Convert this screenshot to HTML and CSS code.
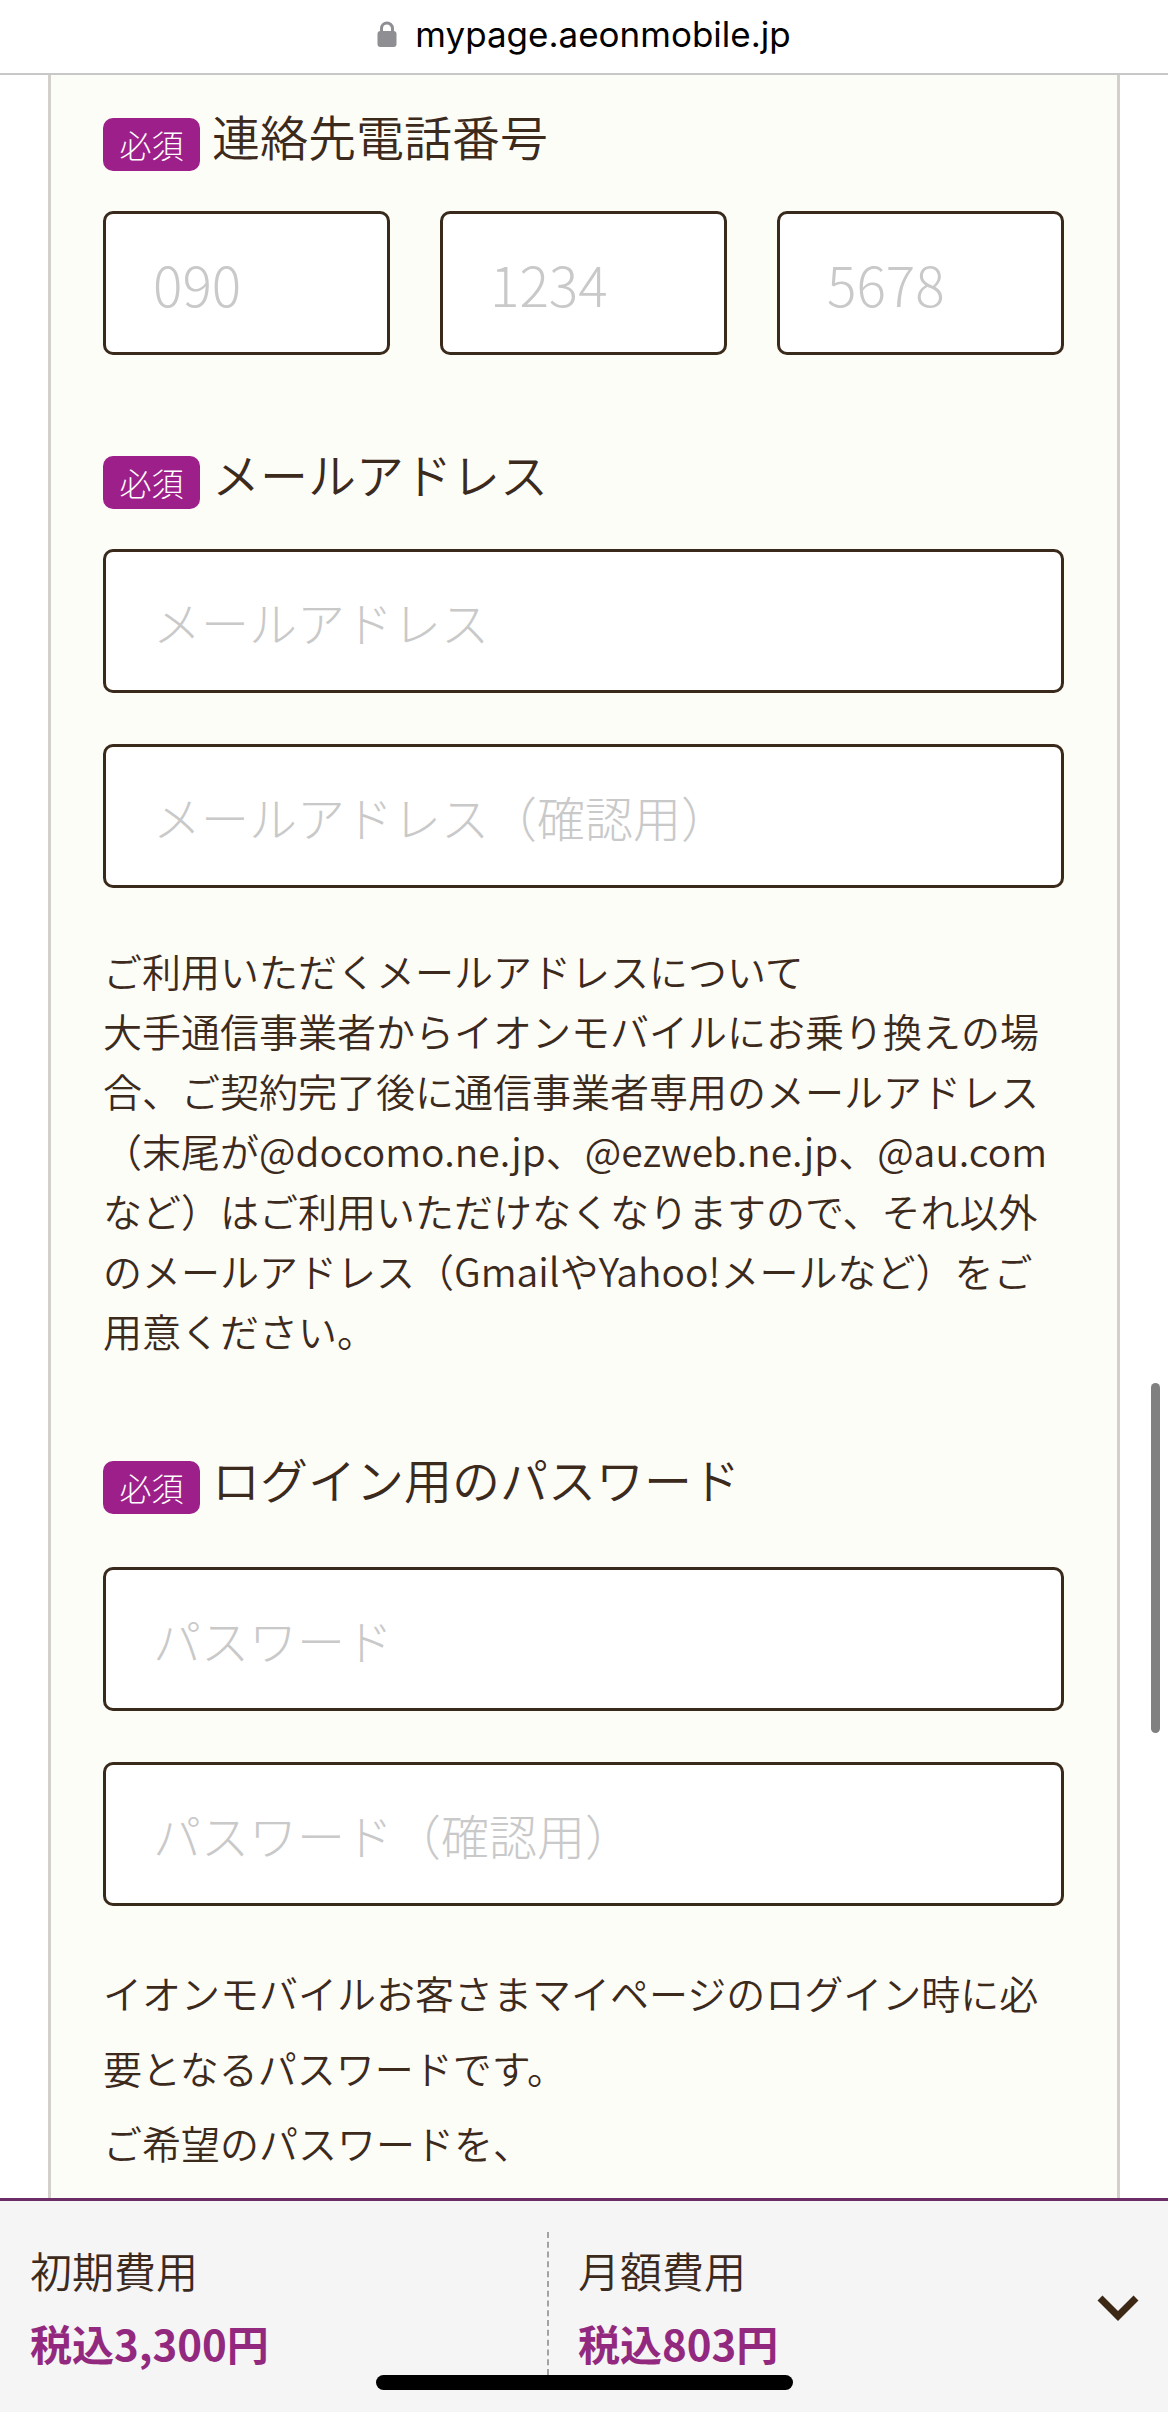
FILE: index.html
```html
<!DOCTYPE html>
<html lang="ja">

<head>
    <meta charset="UTF-8">
    <meta name="viewport" content="width=device-width, initial-scale=1.0">
    <title>お申し込み情報の入力</title>
    <link rel="stylesheet" href="styles.css">
</head>

<body>
    <header class="url-bar">
        <svg class="lock" width="20" height="27" viewBox="0 0 20 27">
            <path d="M4.5 13 V8.5 a5.5 5.5 0 0 1 11 0 V13" fill="none" stroke="#8e8e93" stroke-width="3"/>
            <rect x="0.5" y="11" width="19" height="16" rx="3" fill="#8e8e93"/>
        </svg>
        <span class="url">mypage.aeonmobile.jp</span>
    </header>

    <main class="form-panel">
        <section class="field">
            <div class="field-label">
                <span class="badge">必須</span>
                <h2 class="field-title">連絡先電話番号</h2>
            </div>
            <div class="tel-row">
                <input class="text-input tel-input" type="tel" placeholder="090">
                <input class="text-input tel-input" type="tel" placeholder="1234">
                <input class="text-input tel-input" type="tel" placeholder="5678">
            </div>
        </section>

        <section class="field">
            <div class="field-label">
                <span class="badge">必須</span>
                <h2 class="field-title">メールアドレス</h2>
            </div>
            <input class="text-input" type="email" placeholder="メールアドレス">
            <input class="text-input" type="email" placeholder="メールアドレス（確認用）">
            <p class="note">
                ご利用いただくメールアドレスについて<br>
                大手通信事業者からイオンモバイルにお乗り換えの場<br>
                合、ご契約完了後に通信事業者専用のメールアドレス<br>
                （末尾が@docomo.ne.jp、@ezweb.ne.jp、@au.com<br>
                など）はご利用いただけなくなりますので、それ以外<br>
                のメールアドレス（GmailやYahoo!メールなど）をご<br>
                用意ください。
            </p>
        </section>

        <section class="field field-password">
            <div class="field-label">
                <span class="badge">必須</span>
                <h2 class="field-title">ログイン用のパスワード</h2>
            </div>
            <input class="text-input" type="password" placeholder="パスワード">
            <input class="text-input" type="password" placeholder="パスワード（確認用）">
            <p class="note note-loose">
                イオンモバイルお客さまマイページのログイン時に必<br>
                要となるパスワードです。<br>
                ご希望のパスワードを、
            </p>
        </section>
    </main>

    <div class="scroll-thumb"></div>

    <footer class="fee-bar">
        <div class="fee">
            <div class="fee-label">初期費用</div>
            <div class="fee-price">税込3,300円</div>
        </div>
        <div class="fee fee-monthly">
            <div class="fee-label">月額費用</div>
            <div class="fee-price">税込803円</div>
        </div>
        <svg class="chevron" width="44" height="27" viewBox="0 0 44 27">
            <polyline points="4,4 22,22 40,4" fill="none" stroke="#3d2816" stroke-width="7"/>
        </svg>
        <div class="home-indicator"></div>
    </footer>
</body>

</html>
```

FILE: styles.css
```css
* {
    box-sizing: border-box;
}

body {
    margin: 0;
    height: 2412px;
    overflow: hidden;
    background-color: #ffffff;
    color: #3c2a1d;
    font-family: "Noto Sans CJK JP", "Noto Sans", sans-serif;
}

/* browser address bar */
.url-bar {
    height: 75px;
    display: flex;
    align-items: center;
    justify-content: center;
    gap: 18px;
    padding-bottom: 6px;
    background-color: #ffffff;
    border-bottom: 2px solid #c8c8c8;
}

.lock {
    flex-shrink: 0;
}

.url {
    font-family: Inter, "Liberation Sans", sans-serif;
    font-size: 35px;
    color: #000000;
}

/* form panel */
.form-panel {
    margin: 0 48px;
    min-height: 2337px;
    padding: 42px 53px 0 52px;
    background-color: #fdfdf8;
    border-left: 3px solid #d3cfcb;
    border-right: 3px solid #d3cfcb;
}

.field + .field {
    margin-top: 100px;
}

.field-label {
    display: flex;
    align-items: center;
    height: 54px;
    margin-bottom: 40px;
}

.field-password .field-label {
    margin-bottom: 53px;
}

.badge {
    width: 97px;
    height: 53px;
    display: flex;
    align-items: center;
    justify-content: center;
    border-radius: 10px;
    background-color: #9d208a;
    color: #ffffff;
    font-size: 32px;
    font-weight: 300;
}

.field-title {
    margin: 0 0 0 12px;
    padding-bottom: 18px;
    font-size: 48px;
    font-weight: 350;
    line-height: 54px;
    color: #3c2a1d;
}

.tel-row {
    display: grid;
    grid-template-columns: repeat(3, 1fr);
    gap: 50px;
}

.text-input {
    display: block;
    width: 100%;
    height: 144px;
    padding: 0 47px;
    border: 3px solid #3a2a1c;
    border-radius: 10px;
    background-color: #ffffff;
    font-family: inherit;
    font-size: 48px;
    font-weight: 300;
    color: #3c2a1d;
}

.text-input + .text-input {
    margin-top: 51px;
}

.tel-row .text-input {
    margin-top: 0;
}

.tel-input {
    font-size: 55px;
}

.text-input::placeholder {
    color: #c9c9c9;
}

.note {
    margin: 52px 0 0;
    font-size: 39px;
    font-weight: 350;
    line-height: 60px;
    white-space: nowrap;
}

.note-loose {
    margin-top: 49px;
    line-height: 75px;
}

/* overlay scrollbar */
.scroll-thumb {
    position: fixed;
    top: 1383px;
    right: 8px;
    width: 9px;
    height: 350px;
    border-radius: 5px;
    background-color: #808080;
}

/* fixed fee summary */
.fee-bar {
    position: fixed;
    left: 0;
    right: 0;
    bottom: 0;
    height: 214px;
    display: flex;
    padding-top: 31px;
    background-color: #f5f5f5;
    border-top: 3px solid #6c2c66;
}

.fee {
    width: 547px;
    height: 143px;
    padding: 8px 0 0 30px;
}

.fee-monthly {
    width: auto;
    padding-left: 29px;
    border-left: 2px dashed #a3a3a3;
}

.fee-label {
    font-size: 42px;
    font-weight: 350;
    line-height: 60px;
}

.fee-price {
    margin-top: 13px;
    font-size: 42px;
    font-weight: 700;
    line-height: 60px;
    color: #93297f;
}

.chevron {
    margin: 62px 28px 0 auto;
}

.home-indicator {
    position: absolute;
    left: 50%;
    bottom: 22px;
    width: 417px;
    height: 15px;
    margin-left: -208px;
    border-radius: 8px;
    background-color: #000000;
}
```
